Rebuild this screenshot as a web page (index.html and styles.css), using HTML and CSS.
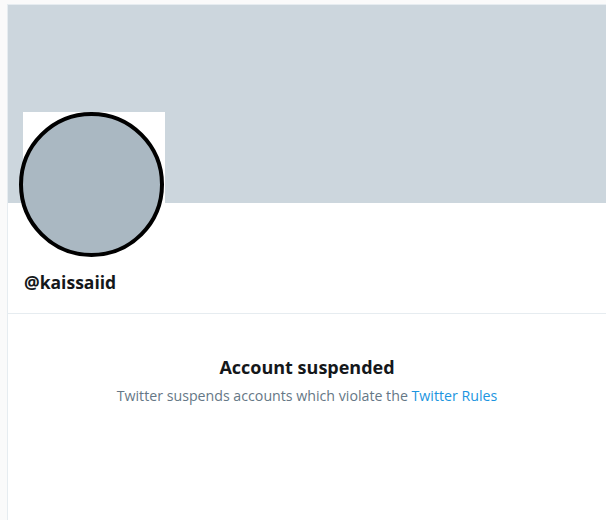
FILE: index.html
```html
<!DOCTYPE html>
<html>
<head>
<meta charset="utf-8">
<link rel="stylesheet" href="styles.css">
</head>
<body>
<div class="page">
  <div class="column">
    <div class="banner"></div>
    <div class="profile">
      <div class="avatar-box">
        <div class="avatar"></div>
      </div>
      <div class="handle">@kaissaiid</div>
    </div>
    <div class="notice">
      <div class="notice-title">Account suspended</div>
      <div class="notice-text">Twitter suspends accounts which violate the <a href="#" class="link">Twitter Rules</a></div>
    </div>
  </div>
</div>
</body>
</html>
```
FILE: styles.css
```css
html, body {
  margin: 0;
  padding: 0;
  background: #fafafa;
  font-family: "Open Sans", "Noto Sans", sans-serif;
}
.page {
  padding: 4px 0 0 7px;
  height: 516px;
}
.column {
  background: #ffffff;
  border-left: 1px solid #e6ecf0;
  border-top: 1px solid #e6ecf0;
  height: 100%;
}
.banner {
  height: 198px;
  background: #ccd6dd;
}
.profile {
  display: flex;
  flex-direction: column;
  padding: 0 15px;
  border-bottom: 1px solid #e6ecf0;
  height: 110px;
}
.avatar-box {
  position: relative;
  width: 142px;
  height: 145px;
  margin-top: -91px;
  background: #ffffff;
  flex: none;
}
.avatar {
  position: absolute;
  left: -4px;
  top: 0;
  width: 145px;
  height: 145px;
  box-sizing: border-box;
  border: 4px solid #000000;
  border-radius: 50%;
  background: #aab8c2;
}
.handle {
  margin-top: 14px;
  margin-left: 1px;
  font-size: 17.5px;
  font-weight: 700;
  color: #14171a;
  line-height: 22px;
}
.notice {
  padding-top: 40px;
  text-align: center;
}
.notice-title {
  font-size: 18px;
  font-weight: 700;
  color: #14171a;
  line-height: 26px;
}
.notice-text {
  margin-top: 6px;
  font-size: 14.2px;
  color: #657786;
  line-height: 20px;
}
.link {
  color: #1b95e0;
  text-decoration: none;
}
```
